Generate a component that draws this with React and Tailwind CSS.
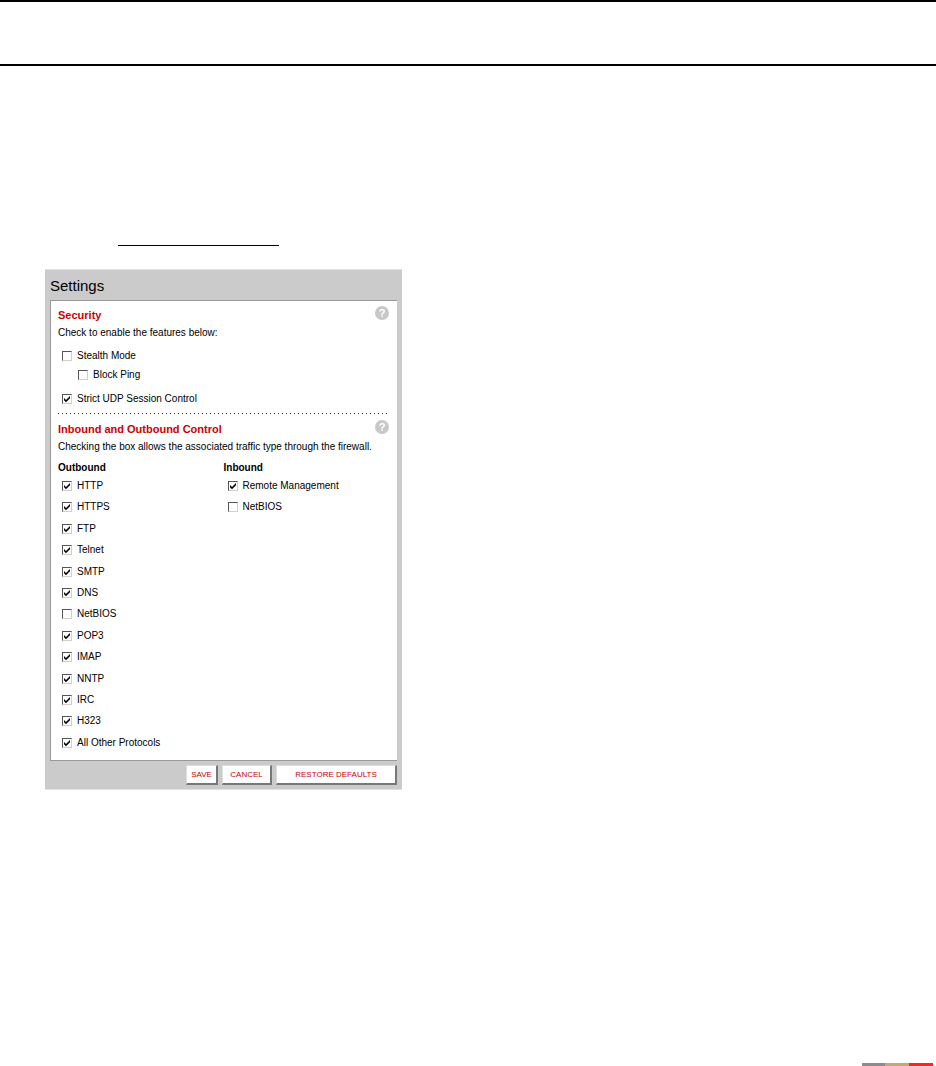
import { useState } from 'react';

const outbound = [
    ['HTTP', true],
    ['HTTPS', true],
    ['FTP', true],
    ['Telnet', true],
    ['SMTP', true],
    ['DNS', true],
    ['NetBIOS', false],
    ['POP3', true],
    ['IMAP', true],
    ['NNTP', true],
    ['IRC', true],
    ['H323', true],
    ['All Other Protocols', true],
];

const inbound = [
    ['Remote Management', true],
    ['NetBIOS', false],
];

const CheckRow = ({ label, defaultChecked = false }) => {
    const [checked, setChecked] = useState(defaultChecked);

    return (
        <label className="flex w-fit items-center gap-[5px] leading-4">
            <span className="relative flex">
                <input
                    type="checkbox"
                    checked={checked}
                    onChange={e => setChecked(e.target.checked)}
                    className="h-[10px] w-[10px] appearance-none border border-t-[#555] border-l-[#555] border-r-[#d4d0c8] border-b-[#d4d0c8] bg-white"
                />
                {checked && (
                    <svg viewBox="0 0 10 10" className="pointer-events-none absolute inset-0 h-[10px] w-[10px]">
                        <path d="M2 4v2.2L4 8.2L8 4.2V2L4 6z" fill="#000" />
                    </svg>
                )}
            </span>
            {label}
        </label>
    );
};

const SectionHeader = ({ title }) => (
    <div className="flex items-start justify-between">
        <h2 className="pt-[2px] text-[11px] leading-4 font-bold text-[#c00]">{title}</h2>
        <button
            type="button"
            aria-label={`Help: ${title}`}
            className="mt-px flex h-[14px] w-[14px] items-center justify-center rounded-full bg-[#c8c8c8] text-[11px] leading-none font-bold text-white"
        >
            ?
        </button>
    </div>
);

const PanelButton = ({ children, className }) => (
    <button
        type="button"
        className={`h-5 border-t border-l border-r-2 border-b-2 border-t-[#ddd] border-l-[#ddd] border-r-[#777] border-b-[#777] bg-white text-[8px] leading-4 text-[#c00] ${className}`}
    >
        {children}
    </button>
);

const App = () => (
    <div className="flex min-h-screen flex-col bg-white font-['Liberation_Sans',Arial,sans-serif] text-black">
        <header className="h-[66px] border-y-2 border-black" />

        <main className="grow pt-[179px] pl-[45px]">
            <div className="ml-[73px] w-[161px] border-b border-black" />

            <form className="mt-[23px] w-full max-w-[357px] border-y border-[#e2e2e2] bg-[#cbcbcb] px-[5px] text-[10px]" onSubmit={e => e.preventDefault()}>
                <h1 className="pt-[6px] pb-1 text-[15px] leading-5">Settings</h1>

                <div className="border-t border-b border-l border-[#999] bg-white pt-1 pr-2 pb-[9px] pl-[7px]">
                    <section>
                        <SectionHeader title="Security" />
                        <p className="mt-[2px] leading-4">Check to enable the features below:</p>
                        <div className="mt-[7px] ml-1">
                            <CheckRow label="Stealth Mode" />
                            <div className="mt-[3px] ml-4">
                                <CheckRow label="Block Ping" />
                            </div>
                            <div className="mt-2">
                                <CheckRow label="Strict UDP Session Control" defaultChecked />
                            </div>
                        </div>
                    </section>

                    <div className="mt-[6px] h-px bg-[linear-gradient(to_right,#333_1px,transparent_1px)] bg-[length:4px_1px]" />

                    <section className="mt-[5px]">
                        <SectionHeader title="Inbound and Outbound Control" />
                        <p className="mt-[2px] leading-4 whitespace-nowrap">Checking the box allows the associated traffic type through the firewall.</p>
                        <div className="mt-[5px] grid grid-cols-2 items-start">
                            <div>
                                <h3 className="leading-4 font-bold">Outbound</h3>
                                <div className="mt-[2px] ml-1 flex min-h-[273px] flex-col justify-between">
                                    {outbound.map(([label, on]) => <CheckRow key={label} label={label} defaultChecked={on} />)}
                                </div>
                            </div>
                            <div>
                                <h3 className="leading-4 font-bold">Inbound</h3>
                                <div className="mt-[2px] ml-1 flex flex-col gap-[5px]">
                                    {inbound.map(([label, on]) => <CheckRow key={label} label={label} defaultChecked={on} />)}
                                </div>
                            </div>
                        </div>
                    </section>
                </div>

                <div className="flex justify-end gap-1 pt-1 pb-1">
                    <PanelButton className="w-8">SAVE</PanelButton>
                    <PanelButton className="w-[50px]">CANCEL</PanelButton>
                    <PanelButton className="w-[121px]">RESTORE DEFAULTS</PanelButton>
                </div>
            </form>
        </main>

        <footer className="flex h-[3px] justify-end pr-[3px]">
            <div className="w-[23px] bg-[#918a8c]" />
            <div className="w-6 bg-[#c3a878]" />
            <div className="w-6 bg-[#ed2a2a]" />
        </footer>
    </div>
);

export default App;
